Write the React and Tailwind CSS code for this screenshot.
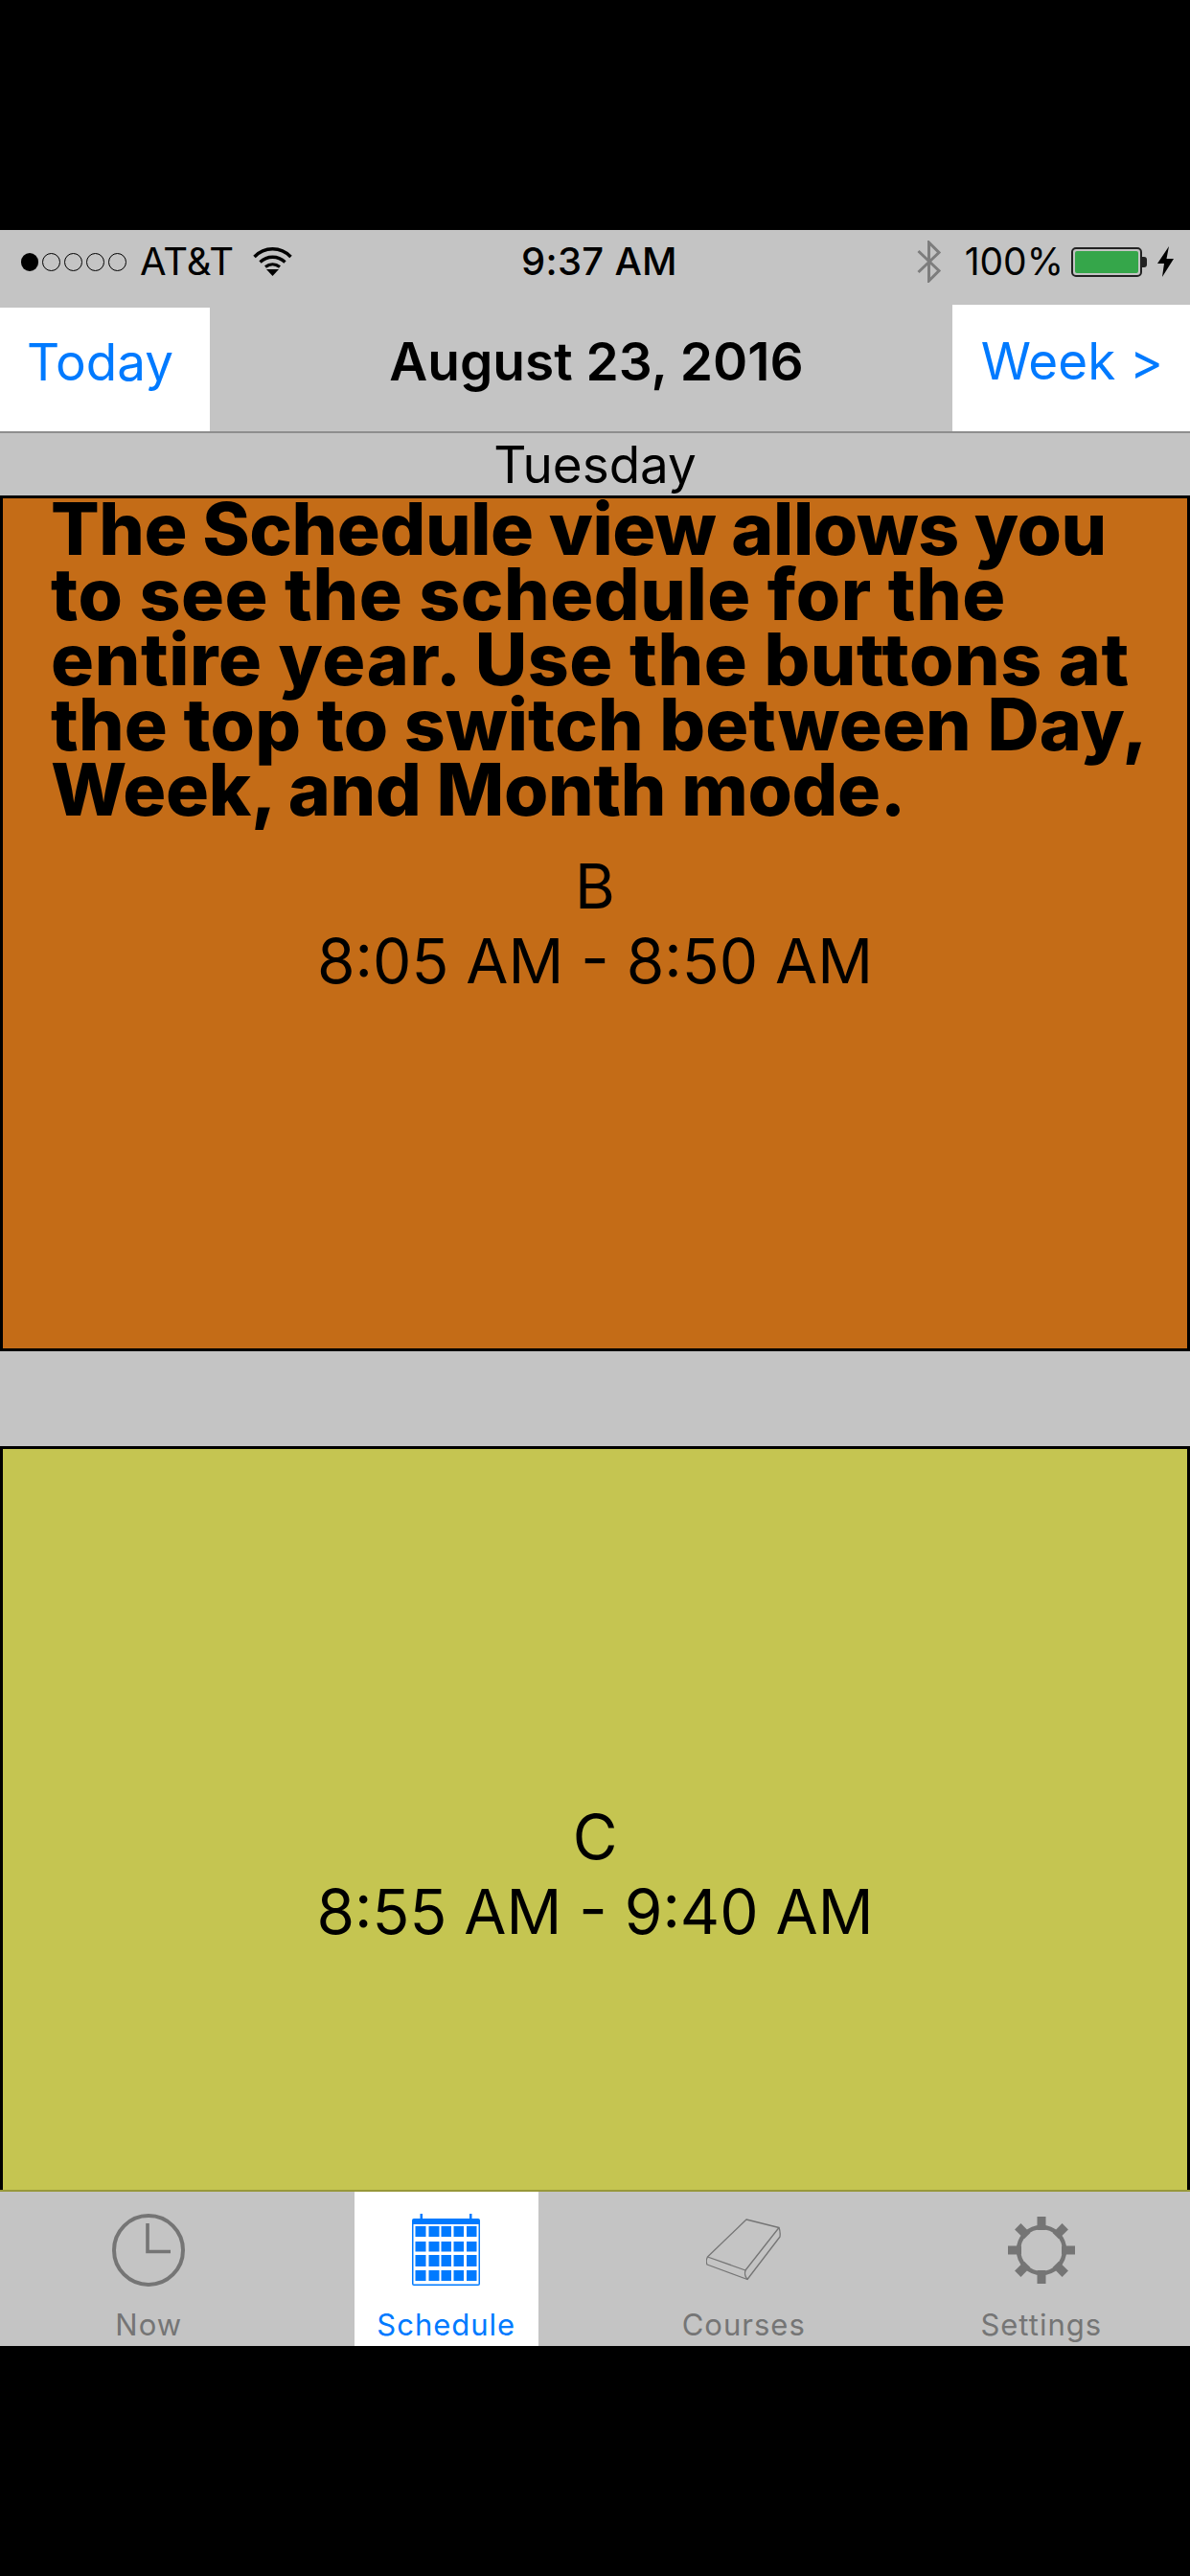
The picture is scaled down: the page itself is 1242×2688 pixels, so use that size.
const SF = "font-['Inter','Liberation_Sans',sans-serif]";

function Wifi() {
  return (
    <svg width="41" height="30" viewBox="0 0 41 30" fill="none" className="ml-[20px]">
      <path d="M1.5 10 C12 -1 29 -1 39.5 10" stroke="#000" strokeWidth="3.4" />
      <path d="M7.5 15.5 C15 8.5 26 8.5 33.5 15.5" stroke="#000" strokeWidth="3.4" />
      <path d="M13 20.5 C17.5 17 23.5 17 28 20.5" stroke="#000" strokeWidth="3.2" />
      <path d="M14 23 L27 23 L20.5 30 Z" fill="#000" />
    </svg>
  );
}

function Bluetooth() {
  return (
    <svg width="26" height="44" viewBox="0 0 26 44" fill="none">
      <path d="M1.5 11 L23 31.5 L12.5 42 L12.5 2 L23 12.5 L1.5 33" stroke="#7d7d7d" strokeWidth="3" />
    </svg>
  );
}

function Bolt() {
  return (
    <svg width="19" height="32" viewBox="0 0 19 32" className="block">
      <path d="M13 0 L1 18 L8 18 L6 32 L18 13 L10.5 13 Z" fill="#000" />
    </svg>
  );
}

function Battery() {
  return (
    <div className="flex items-center ml-[8px]">
      <div className="w-[74px] h-[31px] border-2 border-[#222] rounded-[5px] p-[2px]">
        <div className="w-full h-full bg-[#35a64a] rounded-[2px]" />
      </div>
      <div className="w-[5px] h-[11px] bg-[#222] rounded-r-[3px]" />
    </div>
  );
}

function Clock() {
  return (
    <svg width="76" height="76" viewBox="0 0 76 76" fill="none">
      <circle cx="38" cy="38" r="36" stroke="#757575" strokeWidth="4" />
      <path d="M37 10 V39.5 H61" stroke="#757575" strokeWidth="3.6" />
    </svg>
  );
}

function Calendar() {
  const cols = [[3.5, 11], [17.5, 11], [30.5, 10.5], [43.5, 10.5], [57, 10.5]];
  const rows = [[13, 11], [29, 10.5], [43, 12], [59, 11]];
  return (
    <svg width="71" height="75" viewBox="0 0 71 75">
      <rect x="0" y="5" width="71" height="70" rx="2" fill="#007aff" />
      <rect x="8.5" y="0" width="2.5" height="6" fill="#007aff" />
      <rect x="60" y="0" width="2.5" height="6" fill="#007aff" />
      <rect x="1.5" y="11" width="68" height="62.5" fill="#ffffff" />
      {rows.map(([y, h]) =>
        cols.map(([x, w]) => (
          <rect key={`${x}-${y}`} x={x} y={y} width={w} height={h} fill="#007aff" />
        ))
      )}
    </svg>
  );
}

function Book() {
  return (
    <svg width="78" height="65" viewBox="0 0 78 65" fill="none" stroke="#757575" strokeWidth="1.3" strokeLinejoin="round">
      <path d="M42 1 L76 9.5 L41 54 L1.5 40 Z" />
      <path d="M1.5 40 C0 43 0 46 1 48 L43 63.5 L77 19 C77.5 15 77 12 76 9.5" />
      <path d="M41 54 C40 57 41 61 43 63.5" />
    </svg>
  );
}

function Gear() {
  const teeth = [0, 45, 90, 135, 180, 225, 270, 315];
  return (
    <svg width="70" height="70" viewBox="0 0 70 70" fill="none">
      <circle cx="35" cy="35" r="24" stroke="#757575" strokeWidth="4.5" />
      {teeth.map((a) => (
        <rect key={a} x="30.5" y="0" width="9" height="14" fill="#757575" transform={`rotate(${a} 35 35)`} />
      ))}
    </svg>
  );
}

function Tab({ label, icon, active }) {
  return (
    <div className="flex justify-center">
      <div className={`w-[192px] flex flex-col items-center ${active ? "bg-white text-[#007aff]" : "text-[#757575]"}`}>
        <div className="h-[121px] flex items-center justify-center">{icon}</div>
        <div className="text-[31px] leading-[36px] tracking-[1px]">{label}</div>
      </div>
    </div>
  );
}

function Period({ name, time, bg }) {
  return (
    <div className={`h-[893px] ${bg} shrink-0 border-[3px] border-black flex flex-col items-center justify-center text-black text-[64px] leading-[78px]`}>
      <div>{name}</div>
      <div>{time}</div>
    </div>
  );
}

export default function App() {
  return (
    <div className={`${SF} w-[1242px] h-[2688px] bg-black pt-[240px] pb-[240px] flex flex-col overflow-hidden`}>
      <div className="flex-1 min-h-0 flex flex-col bg-[#c4c4c4]">
        <div className="h-[66px] shrink-0 relative flex items-center justify-between pl-[22px] pr-[16px] text-[39px] leading-[50px] text-black">
          <div className="flex items-center">
            <div className="flex gap-[4px] mr-[14px]">
              <span className="w-[18px] h-[19px] rounded-full bg-black" />
              <span className="w-[19px] h-[19px] rounded-full border-[1.5px] border-black" />
              <span className="w-[19px] h-[19px] rounded-full border-[1.5px] border-black" />
              <span className="w-[19px] h-[19px] rounded-full border-[1.5px] border-black" />
              <span className="w-[19px] h-[19px] rounded-full border-[1.5px] border-black" />
            </div>
            <span className="text-[40px]">AT&amp;T</span>
            <Wifi />
          </div>
          <span className="absolute left-[544px] font-medium text-[40px] tracking-[0.3px]">9:37 AM</span>
          <div className="flex items-center">
            <Bluetooth />
            <span className="ml-[24px]">100%</span>
            <Battery />
            <span className="ml-[10px]"><Bolt /></span>
          </div>
        </div>

        <div className="h-[146px] shrink-0 flex items-end justify-between border-b-2 border-[#8e8e8e]">
          <div className="w-[219px] h-[129px] bg-white flex items-center justify-center text-[#007aff] text-[53px] pb-[14px] pr-[10px]">Today</div>
          <div className="flex-1 pl-[32px] text-center text-[55px] font-semibold text-black pb-[43px] leading-[60px]">August 23, 2016</div>
          <div className="w-[248px] h-[132px] bg-white flex items-center justify-center text-[#007aff] text-[53px] pb-[12px] pl-[2px]">Week &gt;</div>
        </div>

        <div className="h-[65px] shrink-0 flex items-center justify-center text-[53px] leading-[60px] text-black pt-[1px]">Tuesday</div>

        <div className="flex-1 min-h-0 relative overflow-hidden">
          <Period name="B" time="8:05 AM - 8:50 AM" bg="bg-[#c46c17]" />
          <div className="mt-[99px]">
            <Period name="C" time="8:55 AM - 9:40 AM" bg="bg-[#c5c551]" />
          </div>
          <div className="absolute left-[53px] top-[1px] w-[1170px] text-black font-extrabold text-[75px] leading-[68px]">
            <div className="tracking-[-0.4px]">The Schedule view allows you</div>
            <div className="tracking-[0.55px]">to see the schedule for the</div>
            <div className="tracking-[0.6px]">entire year. Use the buttons at</div>
            <div className="tracking-[0.13px]">the top to switch between Day,</div>
            <div className="tracking-[-0.34px]">Week, and Month mode.</div>
          </div>
        </div>

        <div className="h-[163px] shrink-0 border-t-2 border-[#98983a] grid grid-cols-4 bg-[#c4c4c4]">
          <Tab label="Now" icon={<Clock />} />
          <Tab label="Schedule" icon={<Calendar />} active />
          <Tab label="Courses" icon={<Book />} />
          <Tab label="Settings" icon={<Gear />} />
        </div>
      </div>
    </div>
  );
}
